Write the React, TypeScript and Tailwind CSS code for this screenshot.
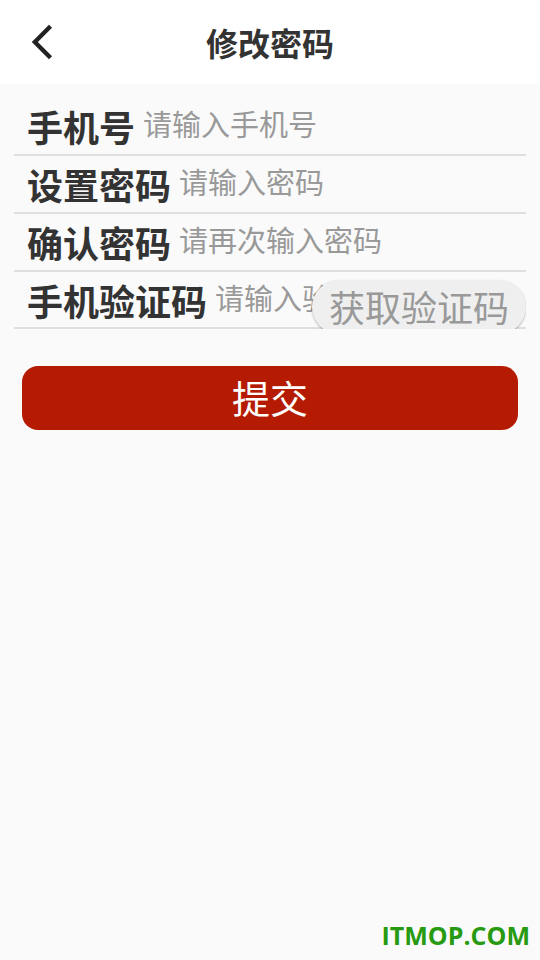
import React from 'react';

interface FieldProps {
  id: string;
  label: string;
  placeholder: string;
  type?: string;
  children?: React.ReactNode;
}

function Field({ id, label, placeholder, type = 'text', children }: FieldProps) {
  return (
    <div className="relative flex h-[58px] items-center overflow-hidden pb-0.5 pl-[13px] shadow-[inset_0_-2px_0_#dfdfdf] last:h-[57px]">
      <label htmlFor={id} className="shrink-0 text-4xl font-bold text-[#333333]">
        {label}
      </label>
      <input
        id={id}
        type={type}
        placeholder={placeholder}
        className="mb-1 ml-2 min-w-0 flex-1 bg-transparent text-[29px] text-[#333333] outline-none placeholder:text-[#999999]"
      />
      {children}
    </div>
  );
}

export default function App() {
  return (
    <div className="relative flex min-h-screen flex-col bg-[#fafafa] font-['Noto_Sans_CJK_SC',sans-serif]">
      <header className="relative flex h-[84px] items-center justify-center bg-white">
        <button type="button" aria-label="返回" className="absolute left-7 p-1">
          <svg viewBox="0 0 24 36" className="h-9 w-6" fill="none" stroke="#222222" strokeWidth="4.4">
            <path d="M18.5 2.2 L2.8 18 L18.5 33.8" />
          </svg>
        </button>
        <h1 className="text-[32px] font-bold text-[#333333]">修改密码</h1>
      </header>

      <form className="flex flex-col" onSubmit={(e) => e.preventDefault()}>
        <div className="mx-3.5 mt-3.5">
          <Field id="phone" label="手机号" placeholder="请输入手机号" type="tel" />
          <Field id="password" label="设置密码" placeholder="请输入密码" type="password" />
          <Field id="confirm" label="确认密码" placeholder="请再次输入密码" type="password" />
          <Field id="code" label="手机验证码" placeholder="请输入验证码">
            <button
              type="button"
              className="absolute right-0 top-2 h-[54px] rounded-full bg-[#efefef] px-[17px] pb-0.5 text-4xl leading-9 text-[#999999] shadow-[0_1px_2px_rgba(0,0,0,0.3)]"
            >
              获取验证码
            </button>
          </Field>
        </div>
        <button type="submit" className="mx-[22px] mt-[37px] h-16 rounded-2xl bg-[#b51b03] pb-1 text-[38px] text-white">
          提交
        </button>
      </form>

      <footer className="mt-auto px-2.5 py-1.5 text-right font-['Open_Sans',sans-serif] text-[25px] font-bold text-[#279a12]">
        ITMOP.COM
      </footer>
    </div>
  );
}
